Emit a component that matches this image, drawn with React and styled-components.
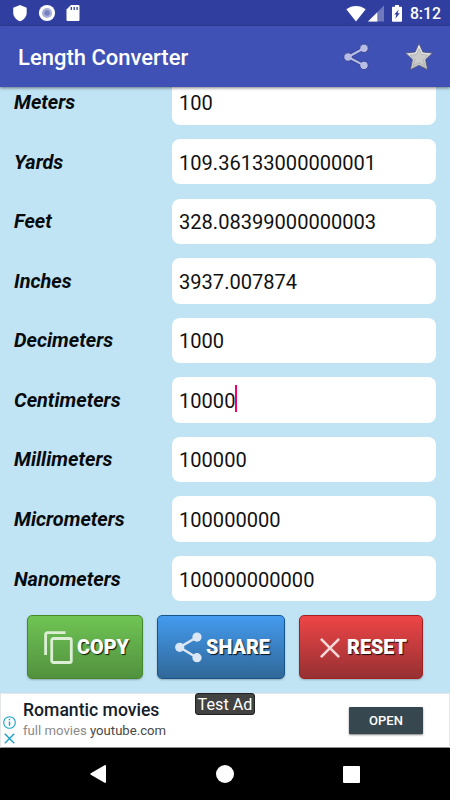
import React from 'react';
import styled, { createGlobalStyle } from 'styled-components';

const GlobalStyle = createGlobalStyle`
  * {
    box-sizing: border-box;
  }

  body {
    margin: 0;
    font-family: Roboto, 'Liberation Sans', sans-serif;
  }

  svg {
    display: block;
    flex: none;
  }
`;

const Screen = styled.div`
  width: 450px;
  height: 800px;
  display: flex;
  flex-direction: column;
  overflow: hidden;
  background: #c1e4f4;
`;

const StatusBar = styled.header`
  flex: none;
  height: 26px;
  padding: 0 9px 0 12px;
  display: flex;
  align-items: center;
  justify-content: space-between;
  background: #303f9f;
  color: #ffffff;
`;

const StatusGroup = styled.div`
  display: flex;
  align-items: center;
  gap: ${({ $gap }) => $gap};
`;

const Clock = styled.span`
  padding-top: 2px;
  font-size: 15.8px;
  font-weight: 500;
  line-height: 24px;
`;

const AppBar = styled.div`
  flex: none;
  height: 61px;
  padding: 0 16px 0 18px;
  display: flex;
  align-items: center;
  background: #3f51b5;
  box-shadow: 0 1px 3px rgba(0, 0, 0, 0.5);
  z-index: 1;
`;

const Title = styled.h1`
  flex: 1;
  margin: 2px 0 0;
  font-size: 22px;
  font-weight: 500;
  line-height: 28px;
  color: #ffffff;
`;

const Actions = styled.div`
  display: flex;
  align-items: center;
  gap: 33px;
`;

// The list is scrolled to its end, so the first row slides under the app bar
const Content = styled.main`
  flex: 1;
  min-height: 0;
  overflow: hidden;
  display: flex;
  flex-direction: column;
  justify-content: flex-end;
`;

const Row = styled.div`
  flex: none;
  height: 45.4px;
  margin-bottom: 14.17px;
  padding: 0 14px;
  display: flex;
  align-items: center;
`;

const Label = styled.label`
  width: 158px;
  padding-top: 2px;
  font-size: 19.9px;
  font-weight: 700;
  font-style: italic;
  line-height: 24px;
  color: #080b0d;
`;

const Field = styled.div`
  flex: 1;
  height: 100%;
  padding: 2px 7px 0;
  display: flex;
  align-items: center;
  border-radius: 8px;
  background: #ffffff;
  font-size: 20.08px;
  color: #111111;
`;

const Caret = styled.span`
  width: 2px;
  height: 27px;
  margin-top: -4px;
  background: #f50068;
`;

const Buttons = styled.div`
  flex: none;
  padding: 0 27px 14px;
  display: flex;
  gap: 14px;
`;

const Button = styled.button`
  width: ${({ $width }) => $width};
  height: 63.6px;
  padding: 1px 0 0 ${({ $inset }) => $inset};
  display: flex;
  align-items: center;
  gap: ${({ $gap }) => $gap};
  border: 1px solid ${({ $border }) => $border};
  border-radius: 5px;
  background: linear-gradient(${({ $from }) => $from}, ${({ $to }) => $to});
  box-shadow: 0 1px 2px rgba(0, 0, 0, 0.25);
  font-family: inherit;
  font-size: 19.8px;
  font-weight: 900;
  line-height: 24px;
  color: #ffffff;
  text-shadow: 1px 1px 1px rgba(0, 0, 0, 0.85);
`;

const Ad = styled.section`
  position: relative;
  flex: none;
  height: 55px;
  padding: 0 26px 0 2px;
  display: flex;
  align-items: center;
  background: #ffffff;
  border: 1px solid #e4e6e8;
  border-bottom-color: #8e8e8e;
`;

const AdMarks = styled.div`
  width: 20px;
  padding-top: 19px;
  display: flex;
  flex-direction: column;
  gap: 4px;
`;

const AdText = styled.div`
  flex: 1;
  margin-top: -2px;
`;

const AdTitle = styled.div`
  font-size: 17.6px;
  font-weight: 500;
  line-height: 22px;
  color: #13202b;
`;

const AdLine = styled.div`
  font-size: 13.15px;
  line-height: 20px;
  color: #8a8a8a;
`;

const AdHost = styled.span`
  color: #484848;
`;

const OpenButton = styled.button`
  width: 74px;
  height: 27px;
  padding: 0;
  border: 0;
  border-radius: 1px;
  background: #37474f;
  box-shadow: 0 1px 2px rgba(0, 0, 0, 0.5);
  font-family: inherit;
  font-size: 13px;
  font-weight: 500;
  color: #ffffff;
`;

const AdBadge = styled.div`
  position: absolute;
  top: -1px;
  left: 194px;
  width: 60px;
  height: 22px;
  border-radius: 3px;
  border: 1px solid #222222;
  background: #424242;
  font-size: 16.2px;
  line-height: 22px;
  text-align: center;
  color: #ffffff;
`;

const NavBar = styled.nav`
  flex: none;
  height: 52px;
  padding: 0 90px;
  display: flex;
  align-items: center;
  justify-content: space-between;
  background: #000000;
`;

const ShieldIcon = () => (
  <svg width="16" height="18" viewBox="0 0 16 18" fill="#ffffff">
    <path d="M8 1 14.7 3.7V8.5C14.7 12.8 11.8 16 8 17.2 4.2 16 1.2 12.8 1.2 8.5V3.7Z" />
  </svg>
);

const RecordIcon = () => (
  <svg width="18" height="18" viewBox="0 0 18 18">
    <circle cx="9" cy="9" r="8.1" fill="#ffffff" />
    <circle cx="9" cy="9" r="5.1" fill="#aab0db" />
    <circle cx="9" cy="9" r="2.7" fill="#7580bd" />
  </svg>
);

const SdCardIcon = () => (
  <svg width="14" height="18" viewBox="0 0 14 18">
    <path d="M5 1h7.200c.8 0 1.300.5 1.300 1.300v13.400c0 .8-.5 1.300-1.300 1.300H1.800C1 17 .5 16.500.5 15.700V5.500Z" fill="#ffffff" />
    <path d="M5.300 3v3M8.200 3v3M11.100 3v3" stroke="#303f9f" strokeWidth="1.300" />
  </svg>
);

const WifiIcon = () => (
  <svg width="20" height="17" viewBox="0 0 20 17">
    <path d="M10 16.500.3 4.300C5.800-.2 14.200-.2 19.700 4.300Z" fill="#ffffff" />
  </svg>
);

const SignalIcon = () => (
  <svg width="16" height="17" viewBox="0 0 16 17">
    <path d="M16 .5V16.500H0Z" fill="#7079bb" />
    <path d="M9.300 7.200v9.300H0Z" fill="#ffffff" />
  </svg>
);

const BatteryIcon = () => (
  <svg width="10" height="17" viewBox="0 0 10 17">
    <path d="M3 0h4v1.700h2.300c.4 0 .7.300.7.700v13.600c0 .4-.3.700-.7.700H.7c-.4 0-.7-.3-.7-.7V2.400c0-.4.300-.7.700-.7H3Z" fill="#ffffff" />
    <path d="M6.800 4.500 2.200 9.500H4.300L3.400 13.700 7.800 8.300H5.600Z" fill="#303f9f" />
  </svg>
);

const BarShareIcon = () => (
  <svg width="28" height="28" viewBox="0 0 28 28">
    <path d="M21 5 5 14 21 22.400" fill="none" stroke="#34408f" strokeWidth="3.600" />
    <g fill="#b8bde6" stroke="#303a83" strokeWidth=".8">
      <circle cx="5" cy="14" r="4.200" />
      <circle cx="21" cy="5.300" r="4.200" />
      <circle cx="21" cy="22.400" r="4.200" />
    </g>
    <path d="M21 5.300 5 14 21 22.400" fill="none" stroke="#b8bde6" strokeWidth="2.200" />
  </svg>
);

const StarIcon = () => (
  <svg width="30" height="30" viewBox="0 0 30 30">
    <defs>
      <linearGradient id="star" x1="0" y1="0" x2="0" y2="1">
        <stop offset="0" stopColor="#f4f4f4" />
        <stop offset="1" stopColor="#bcbcbc" />
      </linearGradient>
    </defs>
    <path
      d="M15 1.300 18.900 10 28.600 11 21.600 17.600 23.800 27.900 15 23.400 6.200 27.900 8.400 17.600 1.400 11 11.100 10Z"
      fill="url(#star)"
      stroke="#50557c"
      strokeWidth=".9"
      strokeLinejoin="round"
    />
    <path
      d="M15 6.500 17.500 12.500 24 13.100 19.200 17.500 20.600 23.800 15 20.800 9.400 23.800 10.800 17.500 6 13.100 12.500 12.500Z"
      fill="#cbcbcb"
      stroke="#aaaaaa"
      strokeWidth=".7"
    />
  </svg>
);

const CopyIcon = () => (
  <svg width="29" height="33" viewBox="0 0 29 33" fill="none" stroke="#dcefd5" strokeWidth="2.800">
    <path d="M1.600 24V3.700c0-1.300.8-2.100 2.100-2.100H21.500" />
    <rect x="7.700" y="7.500" width="19.600" height="24" rx="1.800" />
  </svg>
);

const ShareIcon = () => (
  <svg width="28" height="31" viewBox="0 0 28 31" fill="#dbe7f4" stroke="#dbe7f4">
    <path d="M22 5.100 4.700 15.300 22 25.700" fill="none" strokeWidth="2.400" />
    <g stroke="none">
      <circle cx="4.700" cy="15.300" r="4.600" />
      <circle cx="22" cy="5.100" r="4.600" />
      <circle cx="22" cy="25.700" r="4.600" />
    </g>
  </svg>
);

const ResetIcon = () => (
  <svg width="20" height="20" viewBox="0 0 20 20" stroke="#f8d8d9" strokeWidth="2.600">
    <path d="M.9.9 19.100 19.100M19.100.9.9 19.100" />
  </svg>
);

const InfoIcon = () => (
  <svg width="13" height="13" viewBox="0 0 13 13">
    <circle cx="6.500" cy="6.500" r="5.800" fill="none" stroke="#1ba0c8" strokeWidth="1.100" />
    <path d="M6.500 5.400v4.400M6.500 2.800v1.500" stroke="#1ba0c8" strokeWidth="1.400" />
  </svg>
);

const CloseIcon = () => (
  <svg width="13" height="11" viewBox="0 0 13 11">
    <path d="M1.800.8 11.200 10.200M11.200.8 1.800 10.200" stroke="#1ba0c8" strokeWidth="1.400" />
  </svg>
);

const BackIcon = () => (
  <svg width="16" height="20" viewBox="0 0 16 20" fill="#ffffff">
    <path d="M16 2v16c0 .8-.7 1.200-1.400.8L.8 10.700c-.6-.4-.6-1 0-1.400L14.600 1.200C15.300.8 16 1.200 16 2Z" />
  </svg>
);

const HomeIcon = () => (
  <svg width="18" height="18" viewBox="0 0 18 18" fill="#ffffff">
    <circle cx="9" cy="9" r="9" />
  </svg>
);

const RecentsIcon = () => (
  <svg width="17" height="17" viewBox="0 0 17 17" fill="#ffffff">
    <rect width="17" height="17" rx="1" />
  </svg>
);

const units = [
  { name: 'Meters', value: '100' },
  { name: 'Yards', value: '109.36133000000001' },
  { name: 'Feet', value: '328.08399000000003' },
  { name: 'Inches', value: '3937.007874' },
  { name: 'Decimeters', value: '1000' },
  { name: 'Centimeters', value: '10000', focused: true },
  { name: 'Millimeters', value: '100000' },
  { name: 'Micrometers', value: '100000000' },
  { name: 'Nanometers', value: '100000000000' },
];

const App = () => (
  <Screen>
    <GlobalStyle />

    <StatusBar>
      <StatusGroup $gap="10px">
        <ShieldIcon />
        <RecordIcon />
        <SdCardIcon />
      </StatusGroup>
      <StatusGroup $gap="8px">
        <StatusGroup $gap="2px">
          <WifiIcon />
          <SignalIcon />
        </StatusGroup>
        <BatteryIcon />
        <Clock>8:12</Clock>
      </StatusGroup>
    </StatusBar>

    <AppBar>
      <Title>Length Converter</Title>
      <Actions>
        <BarShareIcon />
        <StarIcon />
      </Actions>
    </AppBar>

    <Content>
      {units.map(({ name, value, focused }) => (
        <Row key={name}>
          <Label>{name}</Label>
          <Field>
            {value}
            {focused && <Caret />}
          </Field>
        </Row>
      ))}

      <Buttons>
        <Button $width="116px" $inset="16px" $gap="4px" $from="#6fc454" $to="#52913e" $border="#438a2b">
          <CopyIcon />
          COPY
        </Button>
        <Button $width="128px" $inset="17px" $gap="3px" $from="#449bef" $to="#306798" $border="#17568d">
          <ShareIcon />
          SHARE
        </Button>
        <Button $width="124px" $inset="20px" $gap="7px" $from="#ee4547" $to="#963032" $border="#a32022">
          <ResetIcon />
          RESET
        </Button>
      </Buttons>
    </Content>

    <Ad>
      <AdMarks>
        <InfoIcon />
        <CloseIcon />
      </AdMarks>
      <AdText>
        <AdTitle>Romantic movies</AdTitle>
        <AdLine>
          full movies <AdHost>youtube.com</AdHost>
        </AdLine>
      </AdText>
      <OpenButton>OPEN</OpenButton>
      <AdBadge>Test Ad</AdBadge>
    </Ad>

    <NavBar>
      <BackIcon />
      <HomeIcon />
      <RecentsIcon />
    </NavBar>
  </Screen>
);

export default App;
